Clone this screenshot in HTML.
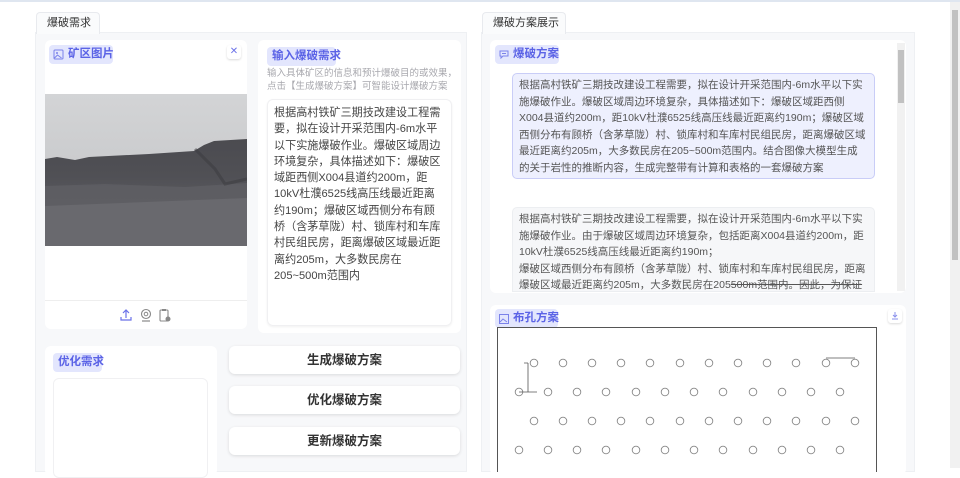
<!DOCTYPE html>
<html><head><meta charset="utf-8"><style>
*{box-sizing:border-box;margin:0;padding:0}
body{width:960px;height:468px;overflow:hidden;background:#fff;font-family:"Liberation Sans","Noto Sans CJK SC",sans-serif;position:relative;color:#333}
.a{position:absolute}
.topline{left:0;top:0;width:960px;height:2px;background:#dfe6f0}
.tab{font-size:11px;color:#333;border:1px solid #e8eaee;border-bottom:none;border-radius:4px 4px 0 0;background:#fafbfc;padding-left:10px;line-height:20px;white-space:nowrap}
.panel{background:#f7f8fa;border:1px solid #eef0f3}
.card{background:#fff;border-radius:6px}
.badge{background:#e3e6fd;color:#5b63e6;font-weight:bold;font-size:11.5px;border-radius:4px;line-height:19px;padding:0 5px;white-space:nowrap;height:19px}
.txt{font-size:11px;line-height:16.3px;color:#444}
.btn{background:#fff;border-radius:6px;box-shadow:0 1px 3px rgba(0,0,0,.12);font-size:12.5px;font-weight:bold;color:#333;text-align:center;line-height:28px}
</style></head><body>
<div class="a topline"></div>
<div class="a" style="left:950px;top:2px;width:10px;height:466px;background:#f1f1f1"></div>
<div class="a" style="left:952px;top:10px;width:6px;height:250px;background:#c1c1c1"></div>

<div class="a panel" style="left:35px;top:32px;width:432px;height:440px"></div>
<div class="a tab" style="left:36px;top:12px;width:64px;height:22px">爆破需求</div>

<div class="a card" style="left:45px;top:40px;width:202px;height:289px"></div>
<div class="a badge" style="left:49px;top:45px;width:64px;padding-left:19px">矿区图片</div>
<svg class="a" style="left:53px;top:49px" width="11" height="11" viewBox="0 0 11 11"><rect x="1" y="1" width="9" height="9" rx="1" fill="none" stroke="#7b82ea"/><circle cx="4" cy="4" r="1" fill="#7b82ea"/><path d="M1.5 9l3-3 4 3" fill="none" stroke="#7b82ea"/></svg>
<div class="a" style="left:227px;top:45px;width:14px;height:14px;border-radius:3px;box-shadow:0 1px 2px rgba(0,0,0,.15);color:#6b72e8;font-size:10px;text-align:center;line-height:14px;background:#fff">✕</div>
<svg class="a" style="left:45px;top:94px" width="202" height="152" viewBox="0 0 202 152">
<defs><linearGradient id="sk" x1="0" y1="0" x2="0" y2="1"><stop offset="0" stop-color="#d3d4d6"/><stop offset=".6" stop-color="#c8c9cb"/><stop offset="1" stop-color="#e2ded2"/></linearGradient>
<linearGradient id="gr" x1="0" y1="0" x2="0" y2="1"><stop offset="0" stop-color="#4b4b50"/><stop offset=".35" stop-color="#505055"/><stop offset="1" stop-color="#6a6a6f"/></linearGradient></defs>
<rect width="202" height="152" fill="url(#sk)"/>
<path d="M0 65l12-2 18 3 14-3 60-3 45-3 10-6 10-4 33-2v107H0z" fill="url(#gr)"/>
<path d="M0 92l60-2 80 3 62-4v63H0z" fill="#5f5f64" opacity=".8"/>
<path d="M0 112l202-8v48H0z" fill="#6c6c71" opacity=".8"/>
<path d="M150 55l20 20 10 15 22-5" stroke="#3a3a3e" stroke-width="3" fill="none" opacity=".5"/>
</svg>
<div class="a" style="left:45px;top:300px;width:202px;height:1px;background:#eee"></div>
<svg class="a" style="left:120px;top:308px" width="52" height="14" viewBox="0 0 52 14">
<path d="M6 10V2M3 5l3-3 3 3M1 9v3h10V9" fill="none" stroke="#6b72e8" stroke-width="1.2"/>
<circle cx="26" cy="6" r="4.5" fill="none" stroke="#888" stroke-width="1.1"/><circle cx="26" cy="6" r="1.8" fill="none" stroke="#888"/><path d="M22 13h8" stroke="#888" stroke-width="1.2"/>
<rect x="40" y="2" width="8" height="11" rx="1" fill="none" stroke="#888" stroke-width="1.1"/><rect x="42" y="1" width="4" height="2" fill="#888"/><circle cx="48" cy="11" r="2.5" fill="#888"/>
</svg>

<div class="a card" style="left:258px;top:40px;width:203px;height:293px"></div>
<div class="a badge" style="left:267px;top:47px;width:69px">输入爆破需求</div>
<div class="a" style="left:267px;top:68px;width:190px;font-size:9.5px;line-height:12.5px;color:#a8a8ae">输入具体矿区的信息和预计爆破目的或效果，点击【生成爆破方案】可智能设计爆破方案</div>
<div class="a" style="left:267px;top:99px;width:185px;height:227px;border:1px solid #f0f0f2;border-radius:6px;box-shadow:0 1px 2px rgba(0,0,0,.06)"></div>
<div class="a txt" style="left:274px;top:105px;width:168px;font-size:11.1px">根据高村铁矿三期技改建设工程需要，拟在设计开采范围内-6m水平以下实施爆破作业。爆破区域周边环境复杂，具体描述如下：爆破区域距西侧X004县道约200m，距10kV杜濮6525线高压线最近距离约190m；爆破区域西侧分布有顾桥（含茅草陇）村、锁库村和车库村民组民房，距离爆破区域最近距离约205m，大多数民房在205~500m范围内</div>

<div class="a card" style="left:45px;top:346px;width:172px;height:130px"></div>
<div class="a badge" style="left:53px;top:353px;width:49px">优化需求</div>
<div class="a" style="left:53px;top:378px;width:155px;height:100px;border:1px solid #f0f0f2;border-radius:6px"></div>
<div class="a btn" style="left:229px;top:346px;width:231px">生成爆破方案</div>
<div class="a btn" style="left:229px;top:386px;width:231px">优化爆破方案</div>
<div class="a btn" style="left:229px;top:427px;width:231px">更新爆破方案</div>

<div class="a panel" style="left:481px;top:32px;width:434px;height:440px"></div>
<div class="a tab" style="left:482px;top:12px;width:84px;height:22px">爆破方案展示</div>

<div class="a card" style="left:490px;top:40px;width:416px;height:253px"></div>
<div class="a" style="left:897px;top:43px;width:8px;height:248px;background:#f1f1f1"></div>
<div class="a" style="left:898px;top:50px;width:6px;height:53px;background:#c1c1c1"></div>
<div class="a badge" style="left:495px;top:45px;width:64px;padding-left:18px">爆破方案</div>
<svg class="a" style="left:499px;top:50px" width="10" height="9" viewBox="0 0 10 9"><path d="M1 1h8v5H4L2 8V6H1z" fill="none" stroke="#7b82ea"/><path d="M3 3.5h4" stroke="#7b82ea"/></svg>
<div class="a txt" style="left:512px;top:73px;width:363px;height:106px;background:#eef0fe;border:1px solid #c9cdf7;border-radius:5px;padding:3px 6px;line-height:16.6px;color:#555;font-size:10.5px">根据高村铁矿三期技改建设工程需要，拟在设计开采范围内-6m水平以下实施爆破作业。爆破区域周边环境复杂，具体描述如下：爆破区域距西侧X004县道约200m，距10kV杜濮6525线高压线最近距离约190m；爆破区域西侧分布有顾桥（含茅草陇）村、锁库村和车库村民组民房，距离爆破区域最近距离约205m，大多数民房在205~500m范围内。结合图像大模型生成的关于岩性的推断内容，生成完整带有计算和表格的一套爆破方案</div>
<div class="a" style="left:512px;top:207px;width:363px;height:85px;overflow:hidden;background:#f6f7f9;border:1px solid #eceef1;border-radius:5px 5px 0 0">
<div class="txt" style="padding:3px 6px;line-height:16.6px;color:#555;font-size:10.5px">根据高村铁矿三期技改建设工程需要，拟在设计开采范围内-6m水平以下实施爆破作业。由于爆破区域周边环境复杂，包括距离X004县道约200m，距10kV杜濮6525线高压线最近距离约190m；<br>爆破区域西侧分布有顾桥（含茅草陇）村、锁库村和车库村民组民房，距离爆破区域最近距离约205m，大多数民房在205<s>500m范围内。因此，为保证生</s></div></div>

<div class="a card" style="left:490px;top:305px;width:416px;height:170px"></div>
<div class="a badge" style="left:495px;top:309px;width:63px;padding-left:18px">布孔方案</div>
<svg class="a" style="left:499px;top:314px" width="10" height="10" viewBox="0 0 10 10"><rect x=".5" y=".5" width="9" height="9" fill="none" stroke="#7b82ea"/><path d="M1 8l3-3 4 3" fill="none" stroke="#7b82ea"/></svg>
<div class="a" style="left:888px;top:309px;width:14px;height:14px;border-radius:3px;box-shadow:0 1px 2px rgba(0,0,0,.15);background:#fff"></div>
<svg class="a" style="left:891px;top:311px" width="8" height="9" viewBox="0 0 8 9"><path d="M4 1v5M2 4l2 2 2-2M1 8h6" fill="none" stroke="#8a90ec"/></svg>
<svg class="a" style="left:497px;top:327px" width="381" height="145" viewBox="0 0 381 145">
<rect x=".5" y=".5" width="379" height="150" fill="#fff" stroke="#555"/>
<g fill="none" stroke="#888" stroke-width=".9">
<circle cx="37" cy="36" r="3.8"/><circle cx="66" cy="36" r="3.8"/><circle cx="95" cy="36" r="3.8"/><circle cx="124" cy="36" r="3.8"/><circle cx="153" cy="36" r="3.8"/><circle cx="183" cy="36" r="3.8"/><circle cx="212" cy="36" r="3.8"/><circle cx="241" cy="36" r="3.8"/><circle cx="270" cy="36" r="3.8"/><circle cx="299" cy="36" r="3.8"/><circle cx="329" cy="36" r="3.8"/><circle cx="358" cy="36" r="3.8"/>
<circle cx="22" cy="65" r="3.8"/><circle cx="51" cy="65" r="3.8"/><circle cx="80" cy="65" r="3.8"/><circle cx="109" cy="65" r="3.8"/><circle cx="139" cy="65" r="3.8"/><circle cx="168" cy="65" r="3.8"/><circle cx="197" cy="65" r="3.8"/><circle cx="226" cy="65" r="3.8"/><circle cx="256" cy="65" r="3.8"/><circle cx="285" cy="65" r="3.8"/><circle cx="314" cy="65" r="3.8"/><circle cx="343" cy="65" r="3.8"/>
<circle cx="37" cy="94" r="3.8"/><circle cx="66" cy="94" r="3.8"/><circle cx="95" cy="94" r="3.8"/><circle cx="124" cy="94" r="3.8"/><circle cx="153" cy="94" r="3.8"/><circle cx="183" cy="94" r="3.8"/><circle cx="212" cy="94" r="3.8"/><circle cx="241" cy="94" r="3.8"/><circle cx="270" cy="94" r="3.8"/><circle cx="299" cy="94" r="3.8"/><circle cx="329" cy="94" r="3.8"/><circle cx="358" cy="94" r="3.8"/>
<circle cx="22" cy="123" r="3.8"/><circle cx="51" cy="123" r="3.8"/><circle cx="80" cy="123" r="3.8"/><circle cx="109" cy="123" r="3.8"/><circle cx="139" cy="123" r="3.8"/><circle cx="168" cy="123" r="3.8"/><circle cx="197" cy="123" r="3.8"/><circle cx="226" cy="123" r="3.8"/><circle cx="256" cy="123" r="3.8"/><circle cx="285" cy="123" r="3.8"/><circle cx="314" cy="123" r="3.8"/><circle cx="343" cy="123" r="3.8"/>
</g>
<path d="M31 36V65M27 36h4M22 65h18M329 31h29" stroke="#555" stroke-width=".8" fill="none"/>
</svg>
</body></html>
